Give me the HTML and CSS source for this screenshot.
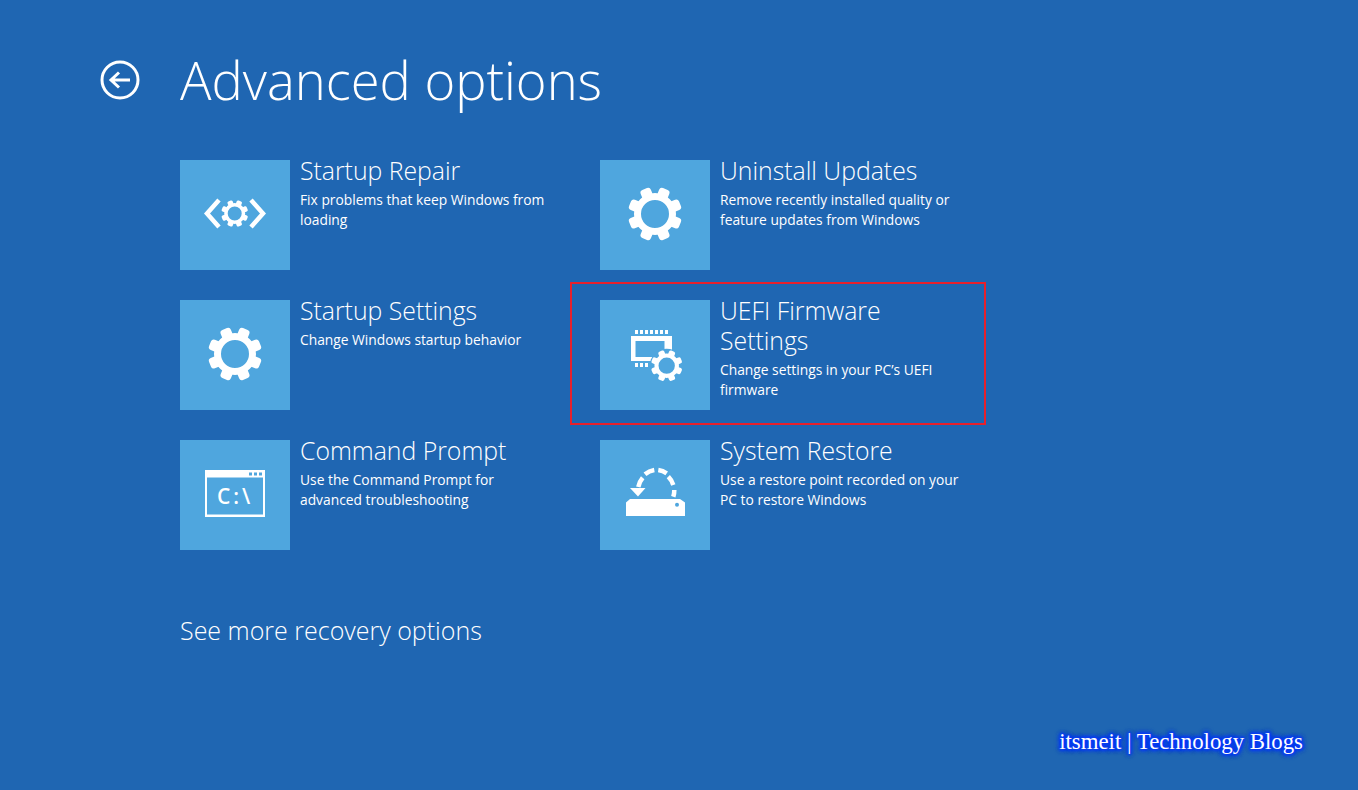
FILE: index.html
```html
<!DOCTYPE html>
<html lang="en">
<head>
  <meta charset="UTF-8">
  <title>Advanced options</title>
  <link rel="stylesheet" href="styles.css">
</head>
<body>
  <svg class="defs" width="0" height="0">
    <symbol id="gear" viewBox="-30 -30 60 60" overflow="visible">
      <circle r="17.5" fill="none" stroke="#fff" stroke-width="7"/>
      <g fill="#fff">
        <rect x="-5.500" y="-27" width="11" height="10" rx="3" transform="rotate(22.5)"/>
        <rect x="-5.500" y="-27" width="11" height="10" rx="3" transform="rotate(67.5)"/>
        <rect x="-5.500" y="-27" width="11" height="10" rx="3" transform="rotate(112.5)"/>
        <rect x="-5.500" y="-27" width="11" height="10" rx="3" transform="rotate(157.5)"/>
        <rect x="-5.500" y="-27" width="11" height="10" rx="3" transform="rotate(202.5)"/>
        <rect x="-5.500" y="-27" width="11" height="10" rx="3" transform="rotate(247.5)"/>
        <rect x="-5.500" y="-27" width="11" height="10" rx="3" transform="rotate(292.5)"/>
        <rect x="-5.500" y="-27" width="11" height="10" rx="3" transform="rotate(337.5)"/>
      </g>
    </symbol>
  </svg>

  <div class="page">
    <header class="header">
      <svg class="back" viewBox="0 0 40 40" width="40" height="40">
        <circle cx="20" cy="20" r="18" fill="none" stroke="#fff" stroke-width="3"/>
        <path d="M30 20H11M19 12.5L11 20l8 7.500" fill="none" stroke="#fff" stroke-width="3"/>
      </svg>
      <h1 class="title">Advanced options</h1>
    </header>

    <div class="options">
      <div class="option">
        <div class="tile">
          <svg viewBox="0 0 110 110" width="110" height="110">
            <path d="M39 40L27 53.500 39 67M71 40l12 13.500L71 67" fill="none" stroke="#fff" stroke-width="4.500"/>
            <use href="#gear" x="39.700" y="38.500" width="30" height="30"/>
          </svg>
        </div>
        <div class="text">
          <h2>Startup Repair</h2>
          <p>Fix problems that keep Windows from<br>loading</p>
        </div>
      </div>

      <div class="option">
        <div class="tile">
          <svg viewBox="0 0 110 110" width="110" height="110">
            <use href="#gear" x="25" y="24" width="60" height="60"/>
          </svg>
        </div>
        <div class="text">
          <h2>Uninstall Updates</h2>
          <p>Remove recently installed quality or<br>feature updates from Windows</p>
        </div>
      </div>

      <div class="option">
        <div class="tile">
          <svg viewBox="0 0 110 110" width="110" height="110">
            <use href="#gear" x="25" y="24" width="60" height="60"/>
          </svg>
        </div>
        <div class="text">
          <h2>Startup Settings</h2>
          <p>Change Windows startup behavior</p>
        </div>
      </div>

      <div class="option selected">
        <div class="tile">
          <svg viewBox="0 0 110 110" width="110" height="110">
            <path d="M35 30h3v4h-3zM40 30h3v4h-3zM45 30h3v4h-3zM50 30h3v4h-3zM55 30h3v4h-3zM60 30h3v4h-3zM65 30h3v4h-3zM35 63h3v4h-3zM40 63h3v4h-3zM45 63h3v4h-3z" fill="#fff"/>
            <path d="M31 36h41v25H31zM35.500 41v16h29V41z" fill="#fff" fill-rule="evenodd"/>
            <circle cx="66.700" cy="65.700" r="17" fill="#4fa6de"/>
            <use href="#gear" x="49.200" y="48.200" width="35" height="35"/>
          </svg>
        </div>
        <div class="text">
          <h2>UEFI Firmware<br>Settings</h2>
          <p>Change settings in your PC’s UEFI<br>firmware</p>
        </div>
      </div>

      <div class="option">
        <div class="tile">
          <svg viewBox="0 0 110 110" width="110" height="110">
            <path d="M25 30h60v47H25zM27 37.500v37h56v-37z" fill="#fff" fill-rule="evenodd"/>
            <path d="M69 32.500h3v3h-3zM74 32.500h3v3h-3zM79 32.500h3v3h-3z" fill="#4fa6de"/>
            <text class="prompt" x="37" y="64">C:\</text>
          </svg>
        </div>
        <div class="text">
          <h2>Command Prompt</h2>
          <p>Use the Command Prompt for<br>advanced troubleshooting</p>
        </div>
      </div>

      <div class="option">
        <div class="tile">
          <svg viewBox="0 0 110 110" width="110" height="110">
            <path d="M73.300 56.700A20 20 0 0 0 74.300 50M73.300 45A20 20 0 0 0 68.300 36.700M66.700 33.300A20 20 0 0 0 58.300 30M54.300 30A20 20 0 0 0 45 34.300M42.700 37.700A20 20 0 0 0 38.300 47" fill="none" stroke="#fff" stroke-width="4.500"/>
            <path d="M30 48h15.500l-7.500 8.500z" fill="#fff"/>
            <path d="M30 59h50l5 3.500V76H26V62.500z" fill="#fff"/>
            <circle cx="77" cy="64.700" r="2" fill="#4fa6de"/>
          </svg>
        </div>
        <div class="text">
          <h2>System Restore</h2>
          <p>Use a restore point recorded on your<br>PC to restore Windows</p>
        </div>
      </div>
    </div>

    <div class="more">See more recovery options</div>

    <div class="watermark">itsmeit | Technology Blogs</div>
  </div>
</body>
</html>
```

FILE: styles.css
```css
html, body {
  margin: 0;
  height: 100%;
}
body {
  background: #1f66b2;
  color: #fff;
  font-family: "Open Sans", "Noto Sans", sans-serif;
  font-weight: 300;
  overflow: hidden;
}
.defs {
  display: block;
  height: 0;
}
.page {
  height: 790px;
  box-sizing: border-box;
  padding: 50px 55px 35px 100px;
  display: flex;
  flex-direction: column;
}
.header {
  display: flex;
  align-items: center;
  gap: 40px;
  height: 60px;
}
.back {
  flex: none;
}
.title {
  margin: 0;
  font-size: 52.500px;
  font-weight: 300;
  line-height: 60px;
}
.options {
  margin: 50px 0 0 80px;
  display: grid;
  grid-template-columns: 420px 420px;
  grid-auto-rows: 110px;
  row-gap: 30px;
}
.option {
  display: flex;
  gap: 10px;
  position: relative;
}
.selected::after {
  content: "";
  position: absolute;
  left: -30px;
  top: -18px;
  width: 412px;
  height: 139px;
  border: 2px solid #e8202c;
}
.tile {
  flex: none;
  width: 110px;
  height: 110px;
  background: #4fa6de;
}
.tile svg {
  display: block;
}
.prompt {
  fill: #fff;
  font-family: "Open Sans", sans-serif;
  font-size: 21px;
  font-weight: 600;
  letter-spacing: 3px;
}
.text h2 {
  margin: -5px 0 0;
  font-size: 24.800px;
  font-weight: 300;
  line-height: 30px;
}
.text p {
  margin: 5px 0 0;
  font-size: 13.800px;
  font-weight: 400;
  line-height: 20px;
  white-space: nowrap;
}
.more {
  margin: 65px 0 0 80px;
  font-size: 25px;
  line-height: 30px;
}
.watermark {
  margin-top: auto;
  align-self: flex-end;
  font-family: "Liberation Serif", serif;
  font-size: 22.800px;
  font-weight: 400;
  line-height: 26px;
  text-shadow: 0 0 2px #0a3cf5, 0 0 2px #0a3cf5, 0 0 3px #0a3cf5, 0 0 3px #0a3cf5, 0 0 4px #0a3cf5, 0 0 4px #0a3cf5, 0 0 5px #0a3cf5, 0 0 5px #0a3cf5, 0 0 6px #0a3cf5;
}
```
